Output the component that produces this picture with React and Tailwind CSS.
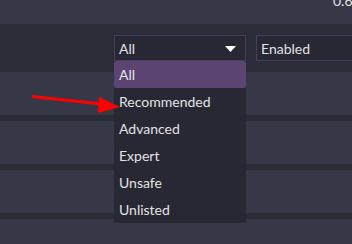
export default function App() {
  const items = ["All", "Recommended", "Advanced", "Expert", "Unsafe", "Unlisted"];
  return (
    <div className="relative w-[352px] h-[244px] overflow-hidden bg-[#2a2c38] text-[#e2e2e6]" style={{ fontFamily: "Lato, 'Noto Sans', sans-serif" }}>
      <div className="h-[24px] bg-[#363848] relative">
        <span className="absolute left-[333px] top-[-6px] text-[14px] leading-none whitespace-nowrap">0.6</span>
      </div>
      <div className="h-[48px] bg-[#2a2c38] flex items-start pt-[11px] pl-[114px] gap-[10px]">
        <div className="relative shrink-0 w-[132px] h-[26px] border border-[#4a3d5e] bg-[#272833] flex items-center pl-[4px]">
          <span className="text-[14px]">All</span>
          <svg className="absolute right-[9px] top-[10px]" width="11" height="6" viewBox="0 0 11 6">
            <polygon points="0,0 11,0 5.5,6" fill="#ffffff" />
          </svg>
        </div>
        <div className="shrink-0 w-[110px] h-[26px] border border-[#4a3d5e] bg-[#272833] flex items-center pl-[4px]">
          <span className="text-[14px]">Enabled</span>
        </div>
      </div>
      <div className="flex flex-col gap-[6px]">
        <div className="h-[43px] bg-[#363848]" />
        <div className="h-[43px] bg-[#363848]" />
        <div className="h-[43px] bg-[#363848]" />
        <div className="h-[43px] bg-[#363848]" />
      </div>
      <div className="absolute left-[114px] top-[61px] w-[132px] bg-[#272833] rounded-b-[3px] flex flex-col">
        {items.map((t, i) => (
          <div key={t} className={"h-[27px] flex items-center pl-[5px] text-[14px] " + (i === 0 ? "bg-[#5b4472] rounded-[2px]" : "")}>
            {t}
          </div>
        ))}
      </div>
      <svg className="absolute left-0 top-0" width="352" height="244" viewBox="0 0 352 244">
        <line x1="32" y1="96.5" x2="102" y2="104" stroke="#ff0000" strokeWidth="3" />
        <polygon points="99,97 98,113 120,107" fill="#ff0000" />
      </svg>
    </div>
  );
}
